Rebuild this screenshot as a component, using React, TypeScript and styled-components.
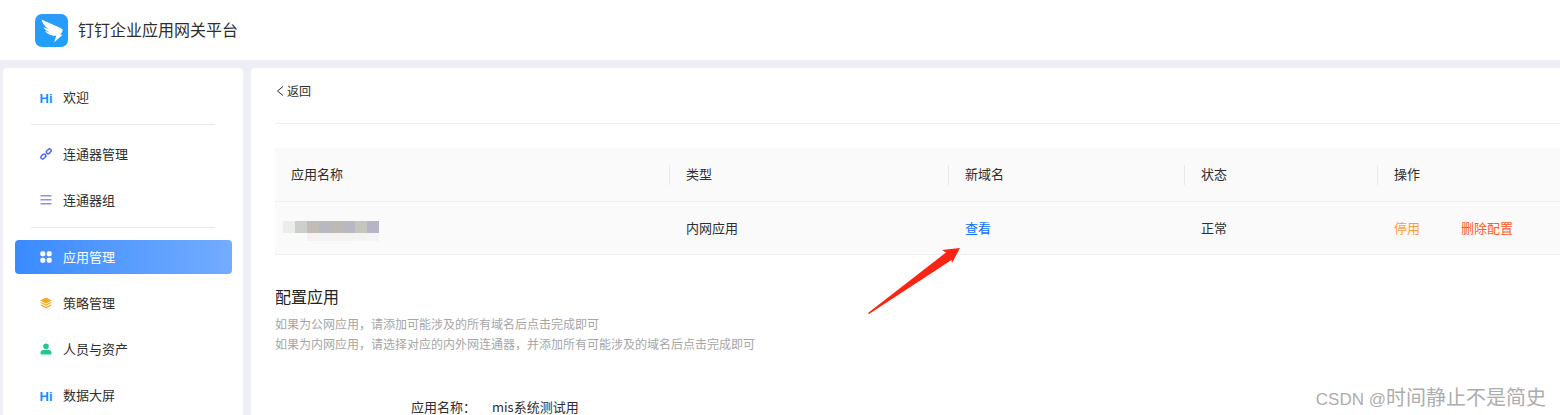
import styled, { createGlobalStyle } from 'styled-components';

const GlobalStyle = createGlobalStyle`
  html, body {
    margin: 0;
    padding: 0;
    background: #eeeff4;
    overflow: hidden;
  }
  * {
    box-sizing: border-box;
  }
  body {
    font-family: 'Noto Sans CJK SC', 'Liberation Sans', sans-serif;
    color: #333;
  }
`;

const Page = styled.div`
  position: relative;
  width: 1560px;
  height: 415px;
  overflow: hidden;
`;

const Header = styled.header`
  display: flex;
  align-items: center;
  gap: 10px;
  height: 60px;
  padding-left: 35px;
  background: #fff;
`;

const Logo = styled.svg`
  width: 33px;
  height: 33px;
  flex: none;
  margin-top: 1px;
`;

const Title = styled.h1`
  margin: 0 0 2px;
  font-size: 16px;
  font-weight: 400;
  color: #2e2e2e;
`;

const Body = styled.div`
  display: flex;
  gap: 8px;
  padding: 8px 0 0 3px;
`;

const Sidebar = styled.nav`
  width: 240px;
  height: 347px;
  flex: none;
  padding: 12px 11px 0 12px;
  background: #fff;
  border-radius: 4px 4px 0 0;
`;

const MenuItem = styled.div<{ $active?: boolean }>`
  display: flex;
  align-items: center;
  gap: 11px;
  height: 34px;
  margin-bottom: 12px;
  padding: 0 0 2px 25px;
  font-size: 13px;
  border-radius: 4px;
  color: ${p => (p.$active ? '#fff' : '#2e2e2e')};
  background: ${p => (p.$active ? 'linear-gradient(90deg, #3a8bff 0%, #73acff 100%)' : 'transparent')};
`;

const MenuIcon = styled.span<{ $color: string }>`
  display: flex;
  align-items: center;
  justify-content: center;
  width: 12px;
  margin-top: 2px;
  flex: none;
  color: ${p => p.$color};
  svg {
    display: block;
    width: 12px;
    height: 12px;
  }
`;

const HiMark = styled.span`
  margin-top: 2px;
  font-family: 'Liberation Sans', sans-serif;
  font-size: 13px;
  font-weight: 700;
`;

const MenuDivider = styled.div`
  height: 1px;
  margin: -2px 17px 12px 16px;
  background: #e8e9ec;
`;

const Main = styled.main`
  flex: 1;
  min-width: 0;
  height: 347px;
  padding-left: 24px;
  background: #fff;
  border-radius: 4px 0 0 0;
`;

const BackRow = styled.div`
  display: flex;
  align-items: center;
  height: 56px;
  margin-bottom: 24px;
  padding: 1px 0 11px;
  border-bottom: 1px solid #eee;
  font-size: 12px;
  color: #2e2e2e;
`;

const BackChevron = styled.svg`
  width: 12px;
  height: 12px;
  flex: none;
`;

const Table = styled.div`
  font-size: 13px;
  color: #2e2e2e;
`;

const TableRow = styled.div<{ $head?: boolean }>`
  display: grid;
  grid-template-columns: 395px 279px 236px 193px 1fr;
  align-items: center;
  height: ${p => (p.$head ? '54px' : '53px')};
  padding-bottom: 2px;
  background: #fafafa;
  border-bottom: 1px solid #efefef;
`;

const HeadCell = styled.div<{ $first?: boolean }>`
  position: relative;
  padding-left: 16px;
  &::before {
    content: '';
    display: ${p => (p.$first ? 'none' : 'block')};
    position: absolute;
    left: -1px;
    top: 50%;
    width: 1px;
    height: 20px;
    margin-top: -9px;
    background: #e9e9e9;
  }
`;

const Cell = styled.div`
  display: flex;
  align-items: center;
  padding-left: 16px;
`;

const Link = styled.span<{ $color: string }>`
  color: ${p => p.$color};
  margin-right: 41px;
`;

const Mosaic = styled.div`
  display: flex;
  flex-direction: column;
  margin: 8px 0 0 -8px;
`;

const MosaicRow = styled.div`
  display: flex;
`;

const MosaicCell = styled.span<{ $color: string; $tall?: boolean }>`
  width: 12px;
  height: ${p => (p.$tall ? '12px' : '8px')};
  background: ${p => p.$color};
`;

const Section = styled.section`
  margin-top: 29px;
`;

const SectionTitle = styled.h2`
  margin: 0 0 6px;
  font-size: 16px;
  line-height: 24px;
  font-weight: 400;
  color: #222;
`;

const Hint = styled.p`
  margin: 0;
  font-size: 12px;
  line-height: 20px;
  color: #a6a6a6;
`;

const FormRow = styled.div`
  display: flex;
  gap: 16px;
  margin-top: 43px;
  font-size: 13px;
  line-height: 20px;
  color: #2e2e2e;
`;

const FormLabel = styled.span`
  width: 201px;
  flex: none;
  text-align: right;
`;

const Arrow = styled.svg`
  position: absolute;
  left: 860px;
  top: 240px;
  width: 110px;
  height: 80px;
`;

const Watermark = styled.div`
  position: absolute;
  right: 14px;
  top: 384px;
  font-size: 20px;
  line-height: 26px;
  color: #adadad;
`;

const WatermarkLatin = styled.span`
  font-family: 'Liberation Sans', sans-serif;
  font-size: 17px;
`;

const menuTop = [
  {
    label: '连通器管理',
    color: '#4a6cf7',
    icon: (
      <svg viewBox="0 0 12 12" fill="none" stroke="currentColor" strokeWidth="1.5">
        <rect x="-2.6" y="-1.6" width="5.4" height="3.4" rx="1.6" transform="translate(3.2 8.6) rotate(-45)" />
        <rect x="-2.6" y="-1.6" width="5.4" height="3.4" rx="1.6" transform="translate(8.6 3.4) rotate(-45)" />
      </svg>
    ),
  },
  {
    label: '连通器组',
    color: '#8c90f6',
    icon: (
      <svg viewBox="0 0 12 12" fill="currentColor">
        <rect x="0.5" y="1" width="11" height="1.5" />
        <rect x="0.5" y="5" width="11" height="1.5" />
        <rect x="0.5" y="9" width="11" height="1.5" />
      </svg>
    ),
  },
];

const menuBottom = [
  {
    label: '策略管理',
    color: '#ffa41c',
    icon: (
      <svg viewBox="0 0 12 12" fill="currentColor">
        <path d="M6 .4 11.8 3.4 6 6.400.200 3.400Z" />
        <path d="M1.400 5.200.200 5.800 6 8.800l5.800-3-1.200-.6L6 7.600Z" />
        <path d="M1.400 7.600.200 8.200 6 11.600l5.800-3.400-1.200-.6L6 10Z" />
      </svg>
    ),
  },
  {
    label: '人员与资产',
    color: '#1fc98a',
    icon: (
      <svg viewBox="0 0 12 12" fill="currentColor">
        <circle cx="6" cy="3.200" r="2.800" />
        <path d="M.6 11.600V9.600C.6 8 2 7 3.600 7h4.800c1.600 0 3 1 3 2.600v2Z" />
      </svg>
    ),
  },
];

const mosaicTop = ['#ececea', '#ccd0cd', '#c2bcb9', '#b9b8c0', '#bdbab6', '#b8b7c2', '#c5c5bd', '#b5b5c4'];
const mosaicBottom = ['#fafafa', '#fafafa', '#f4f3f2', '#f3f3f4', '#f4f3f2', '#f3f3f4', '#f4f4f2', '#f4f4f6'];

const App = () => {
  return (
    <Page>
      <GlobalStyle />
      <Header>
        <Logo viewBox="0 0 33 33">
          <defs>
            <linearGradient id="logoBlue" x1="0" y1="0" x2="0" y2="1">
              <stop offset="0" stopColor="#2a9bfb" />
              <stop offset="1" stopColor="#1f9fff" />
            </linearGradient>
          </defs>
          <rect width="33" height="33" rx="7" fill="url(#logoBlue)" />
          <path
            d="M6.500 5.600C12 8.600 21 11.400 27.600 15.200c.4 1.600-.8 3.600-2.400 5.600h2.600l-8.600 7.400 2-6.400h-3C14 21 11 18.600 10 16.800c1.600.8 3.600 1.400 5 1.600-2.600-1-5.600-3.200-6.600-5.200 2 .9 4 1.500 5.800 1.800C10.600 13.600 7.600 9.800 6.500 5.600Z"
            fill="#fff"
          />
        </Logo>
        <Title>钉钉企业应用网关平台</Title>
      </Header>
      <Body>
        <Sidebar>
          <MenuItem>
            <MenuIcon $color="#1690ff">
              <HiMark>Hi</HiMark>
            </MenuIcon>
            欢迎
          </MenuItem>
          <MenuDivider />
          {menuTop.map(item => (
            <MenuItem key={item.label}>
              <MenuIcon $color={item.color}>{item.icon}</MenuIcon>
              {item.label}
            </MenuItem>
          ))}
          <MenuDivider />
          <MenuItem $active>
            <MenuIcon $color="#fff">
              <svg viewBox="0 0 12 12" fill="currentColor">
                <rect x="0.3" y="0.3" width="5" height="5" rx="1.8" />
                <rect x="6.7" y="0.3" width="5" height="5" rx="1.8" />
                <rect x="0.3" y="6.7" width="5" height="5" rx="1.8" />
                <rect x="6.7" y="6.7" width="5" height="5" rx="1.8" />
              </svg>
            </MenuIcon>
            应用管理
          </MenuItem>
          {menuBottom.map(item => (
            <MenuItem key={item.label}>
              <MenuIcon $color={item.color}>{item.icon}</MenuIcon>
              {item.label}
            </MenuItem>
          ))}
          <MenuItem>
            <MenuIcon $color="#1690ff">
              <HiMark>Hi</HiMark>
            </MenuIcon>
            数据大屏
          </MenuItem>
        </Sidebar>
        <Main>
          <BackRow>
            <BackChevron viewBox="0 0 12 12" fill="none" stroke="#333" strokeWidth="1">
              <path d="M8 1.500 2.500 6 8 10.500" />
            </BackChevron>
            返回
          </BackRow>
          <Table>
            <TableRow $head>
              <HeadCell $first>应用名称</HeadCell>
              <HeadCell>类型</HeadCell>
              <HeadCell>新域名</HeadCell>
              <HeadCell>状态</HeadCell>
              <HeadCell>操作</HeadCell>
            </TableRow>
            <TableRow>
              <Cell>
                <Mosaic>
                  <MosaicRow>
                    {mosaicTop.map((color, i) => (
                      <MosaicCell key={i} $color={color} $tall />
                    ))}
                  </MosaicRow>
                  <MosaicRow>
                    {mosaicBottom.map((color, i) => (
                      <MosaicCell key={i} $color={color} />
                    ))}
                  </MosaicRow>
                </Mosaic>
              </Cell>
              <Cell>内网应用</Cell>
              <Cell>
                <Link $color="#0f6fff">查看</Link>
              </Cell>
              <Cell>正常</Cell>
              <Cell>
                <Link $color="#ff9a3c">停用</Link>
                <Link $color="#ff5a2a">删除配置</Link>
              </Cell>
            </TableRow>
          </Table>
          <Section>
            <SectionTitle>配置应用</SectionTitle>
            <Hint>如果为公网应用，请添加可能涉及的所有域名后点击完成即可</Hint>
            <Hint>如果为内网应用，请选择对应的内外网连通器，并添加所有可能涉及的域名后点击完成即可</Hint>
            <FormRow>
              <FormLabel>应用名称：</FormLabel>
              mis系统测试用
            </FormRow>
          </Section>
        </Main>
      </Body>
      <Arrow viewBox="0 0 110 80">
        <path d="M8 73 L86 12.500 L82 10 L100 8 L92 23 L91.500 20 L9 74 Z" fill="#fb2311" />
      </Arrow>
      <Watermark>
        <WatermarkLatin>CSDN @</WatermarkLatin>时间静止不是简史
      </Watermark>
    </Page>
  );
};

export default App;
